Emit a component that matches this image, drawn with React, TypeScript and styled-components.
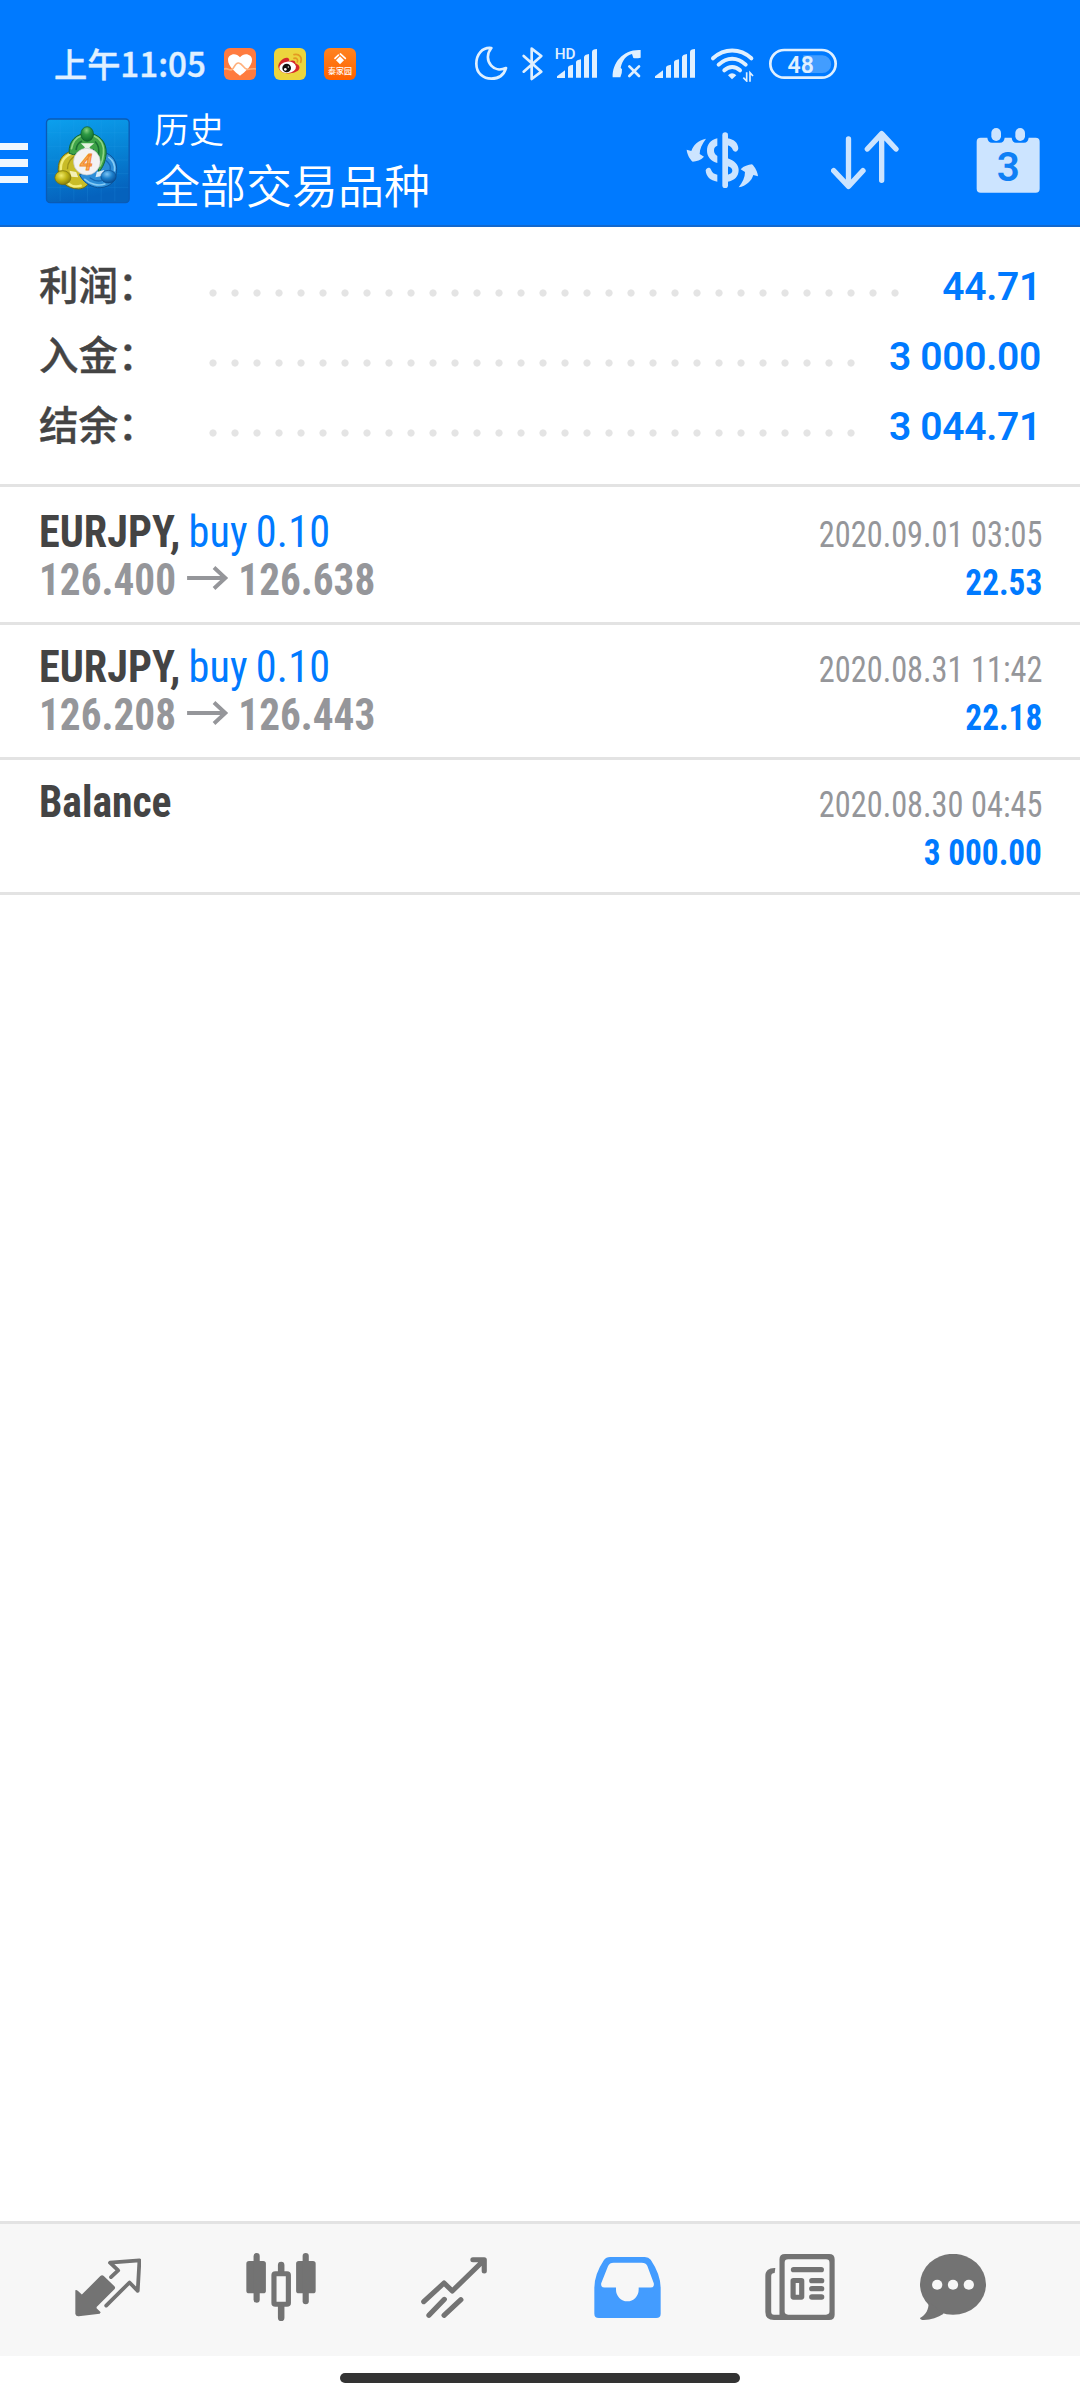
import React from "react";
import styled, { createGlobalStyle } from "styled-components";

const cjk = `"Noto Sans CJK SC", "Noto Sans", sans-serif`;
const latin = `Roboto, "Noto Sans CJK SC", sans-serif`;
const pale = "#cce4ff";
const status = "#e0f0ff";
const blue = "#007aff";

const GlobalStyle = createGlobalStyle`
  *, *::before, *::after { box-sizing: border-box; }
  body { margin: 0; background: #fff; }
`;

const Screen = styled.div`
  width: 1080px;
  height: 2400px;
  display: flex;
  flex-direction: column;
  background: #fff;
  font-family: ${latin};
  overflow: hidden;
`;

const Header = styled.header`
  height: 227px;
  background: ${blue};
  border-bottom: 2px solid #1268cd;
  display: flex;
  flex-direction: column;
`;

const StatusBar = styled.div`
  height: 100px;
  padding: 28px 0 0 54px;
  display: flex;
  align-items: center;
`;

const Clock = styled.div`
  width: 170px;
  margin-top: -3px;
  font: 500 33.2px/36px ${cjk};
  color: ${status};
  -webkit-text-stroke: 0.4px ${status};
  white-space: nowrap;
`;

const Notifications = styled.div`
  display: flex;
  gap: 18px;
  width: 249px;
`;

const StatusIcons = styled.div`
  display: flex;
  svg { display: block; }
`;

const Toolbar = styled.div`
  flex: 1;
  display: flex;
  align-items: flex-start;
`;

const MenuButton = styled.div`
  width: 28px;
  margin-top: 42.500px;
  display: flex;
  flex-direction: column;
  gap: 9px;
`;

const MenuLine = styled.i`
  height: 7.5px;
  background: #eef7ff;
`;

const LogoBox = styled.div`
  margin: 18px 0 0 17px;
  width: 86px;
  height: 86px;
  svg { display: block; }
`;

const Titles = styled.div`
  margin: 6px 0 0 23px;
  flex: 1;
  color: #fff;
  font-family: ${cjk};
  font-weight: 350;
  white-space: nowrap;
`;

const Title = styled.div`
  font-size: 35px;
  line-height: 44px;
`;

const Subtitle = styled.div`
  font-size: 46px;
  line-height: 66px;
`;

const Actions = styled.div`
  display: flex;
  align-items: center;
  height: 120px;
  padding-right: 39px;
  svg { display: block; }
`;

const Action = styled.div<{ $gap: number }>`
  margin-left: ${(p) => p.$gap}px;
`;

const Summary = styled.section`
  height: 260px;
  padding: 25px 39px 0 39px;
  border-bottom: 3px solid #e3e3e3;
`;

const SummaryRow = styled.div`
  height: 70px;
  display: flex;
  align-items: flex-start;
`;

const SummaryLabel = styled.div`
  width: 163px;
  font: 500 39.5px/61px ${cjk};
  color: #444;
  -webkit-text-stroke: 0.35px #444;
  white-space: nowrap;
`;

const Leader = styled.div`
  flex: 1;
  height: 8px;
  margin: 37px 31px 0 0;
  background: radial-gradient(circle at 11px 4px, #e4e4e4 3.2px, transparent 4px) 0 0 / 22px 8px repeat-x;
`;

const SummaryValue = styled.div`
  font: 650 39px/70px ${latin};
  letter-spacing: -0.3px;
  color: ${blue};
  white-space: nowrap;
`;

const List = styled.section`
  flex: 1;
  padding-top: 3px;
`;

const Deal = styled.div`
  height: 135px;
  padding: 20px 38px 0 39px;
  border-bottom: 3px solid #e3e3e3;
  display: flex;
  justify-content: space-between;
`;

const Column = styled.div<{ $end?: boolean }>`
  display: flex;
  flex-direction: column;
  align-items: ${(p) => (p.$end ? "flex-end" : "flex-start")};
  --origin: ${(p) => (p.$end ? "right" : "left")};
`;

const Line = styled.div<{ $squeeze: number }>`
  height: 48px;
  font-stretch: 75%;
  white-space: pre;
  transform: scaleX(${(p) => p.$squeeze});
  transform-origin: var(--origin) center;
`;

const Name = styled(Line)`
  font-size: 44px;
  font-weight: 700;
  line-height: 45px;
  color: #444;
`;

const Prices = styled(Name)`
  color: #95969a;
`;

const Time = styled(Line)`
  font-size: 36.5px;
  font-weight: 430;
  line-height: 50px;
  color: #95969a;
`;

const Profit = styled(Line)`
  font-size: 36px;
  font-weight: 700;
  line-height: 50px;
  color: ${blue};
`;

const Side = styled.span`
  font-weight: 400;
  color: ${blue};
  word-spacing: -2px;
  letter-spacing: 0.2px;
`;

const ArrowIcon = styled.svg`
  width: 45px;
  height: 24px;
  margin: 0 9.5px 0 12px;
  vertical-align: 5px;
`;

const TabBar = styled.nav`
  height: 135px;
  border-top: 3px solid #e3e3e3;
  background: #f7f7f7;
  display: flex;
  padding: 0 41px 0 21.5px;
`;

const Tab = styled.div<{ $width: number }>`
  width: ${(p) => p.$width}px;
  height: 126px;
  display: flex;
  align-items: center;
  justify-content: center;
`;

const GestureArea = styled.footer`
  height: 44px;
  padding-top: 17px;
  display: flex;
  justify-content: center;
`;

const GestureBar = styled.div`
  width: 400px;
  height: 10px;
  border-radius: 5px;
  background: #333;
`;

const HealthIcon = () => (
  <svg width="32" height="32" viewBox="0 0 96 96">
    <rect width="96" height="96" rx="18" fill="#ff7b3f" />
    <path d="M48 83C34 72 12 55 12 35C12 19 35 11 48 28C61 11 84 19 84 35C84 55 62 72 48 83Z" fill="#fff" />
    <path d="M0 64C8 57 15 68 23 65C32 61 32 43 44 45C57 47 58 63 70 64C78 65 87 60 96 63" fill="none" stroke="#ffb07c" strokeWidth="5" />
  </svg>
);

const WeiboIcon = () => (
  <svg width="32" height="32" viewBox="0 0 96 96">
    <rect width="96" height="96" rx="18" fill="#ecd53d" />
    <path d="M13 57C11 42 32 25 42 30C47 32 46 37 45 40C55 36 66 37 64 46C75 50 79 57 75 64C67 79 18 84 13 57Z" fill="#d5292b" />
    <ellipse cx="41" cy="58" rx="25" ry="17" fill="#fff" transform="rotate(-6 41 58)" />
    <circle cx="38" cy="60" r="13" fill="#111" />
    <circle cx="34" cy="64" r="4" fill="#fff" />
    <circle cx="43" cy="57" r="2" fill="#fff" />
    <path d="M60 20C76 16 86 29 80 43M60 31C68 29 73 35 70 42" fill="none" stroke="#e39a22" strokeWidth="5" strokeLinecap="round" />
  </svg>
);

const HomeIcon = () => (
  <svg width="32" height="32" viewBox="0 0 96 96">
    <defs>
      <linearGradient id="home" x1="0" y1="0" x2="0" y2="1">
        <stop offset="0" stopColor="#ff8420" /><stop offset="1" stopColor="#ff6200" />
      </linearGradient>
    </defs>
    <rect width="96" height="96" rx="18" fill="url(#home)" />
    <path d="M33 31L48 17L64 31" fill="none" stroke="#fff" strokeWidth="5" strokeLinecap="round" strokeDasharray="14 8 30" />
    <path d="M48 25L60 37L48 49L36 37Z" fill="#fff" />
    <text x="48" y="77" textAnchor="middle" fontFamily="Noto Sans CJK SC, sans-serif" fontSize="24" fontWeight="500" fill="#fff">泰家园</text>
  </svg>
);

const signalBars = (x: number) => (
  <g fill={status}>
    <path d={`M${x} 144V139L${x + 24} 121V144Z`} />
    <path d={`M${x + 33} 143V112Q${x + 34} 106 ${x + 48} 104V143Z`} />
    <path d={`M${x + 57} 143V96Q${x + 58} 90 ${x + 72} 88V143Z`} />
    <path d={`M${x + 81} 143V81Q${x + 82} 74 ${x + 96} 72V143Z`} />
    <path d={`M${x + 105} 143V65Q${x + 106} 58 ${x + 120} 57V143Z`} />
  </g>
);

const cell = (from: number, to: number) => ({
  width: (to - from) / 3,
  height: 36,
  viewBox: `${from} 48 ${to - from} 108`,
});

const SystemIcons = () => (
  <StatusIcons>
    <svg {...cell(99, 228)}>
      <path d="M154 54C126 51 109 74 109 101C109 130 130 146 154 146C176 146 192 134 198 114C182 121 164 119 153 106C140 91 141 70 154 54Z" fill="none" stroke={status} strokeWidth="8" strokeLinejoin="round" />
    </svg>
    <svg {...cell(228, 330)}>
      <path d="M251 78L304 125L275 147V56L304 78L251 125" fill="none" stroke={status} strokeWidth="8" strokeLinecap="round" strokeLinejoin="round" />
    </svg>
    <svg {...cell(330, 495)}>
      <text x="344" y="87" fontFamily="Roboto, sans-serif" fontWeight="500" fontSize="46" fill={status}>HD</text>
      {signalBars(351)}
    </svg>
    <svg {...cell(495, 624)}>
      <path d="M518 142C516 98 550 57 602 60V83Q588 86 580 84L576 72C558 76 548 91 542 113L546 118Q547 130 541 142Z" fill={status} />
      <path d="M568 109L597 138M597 109L568 138" stroke={status} strokeWidth="8" strokeLinecap="round" />
    </svg>
    <svg {...cell(624, 789)}>{signalBars(645)}</svg>
    <svg {...cell(789, 963)}>
      <g fill="none" stroke={status} strokeWidth="12" strokeLinecap="round">
        <path d="M819 85C853 54 900 54 934 85" />
        <path d="M836 104C861 80 892 80 917 104" />
        <path d="M853 121C867 108 886 108 900 121" />
      </g>
      <path d="M864 136Q876 124 889 136L876 148Z" fill={status} />
      <path d="M920 127V153L910 143M930 155V128L939 138" fill="none" stroke={status} strokeWidth="5" />
    </svg>
    <svg {...cell(963, 1200)}>
      <path d="M1090 76H1147A26 26 0 0 1 1147 129H1090Z" fill="#429dff" />
      <rect x="991" y="60" width="196" height="83" rx="41.5" fill="none" stroke={status} strokeWidth="8" />
      <text x="1082" y="128" textAnchor="middle" fontFamily="Roboto, sans-serif" fontWeight="600" fontSize="69" fill={status}>48</text>
    </svg>
  </StatusIcons>
);

const Logo = () => (
  <svg width="86" height="86" viewBox="5 6 257 258">
    <defs>
      <linearGradient id="sky" x1="0" y1="0" x2="0.2" y2="1">
        <stop offset="0" stopColor="#0ca0ee" />
        <stop offset="0.5" stopColor="#0784d6" />
        <stop offset="1" stopColor="#0562bd" />
      </linearGradient>
      <radialGradient id="green" cx="0.45" cy="0.25" r="0.75">
        <stop offset="0" stopColor="#86d383" /><stop offset="0.4" stopColor="#2e9a45" /><stop offset="1" stopColor="#0d6a2b" />
      </radialGradient>
      <radialGradient id="yellow" cx="0.4" cy="0.35" r="0.7">
        <stop offset="0" stopColor="#f0ea6a" /><stop offset="0.5" stopColor="#c0b416" /><stop offset="1" stopColor="#7f7708" />
      </radialGradient>
      <radialGradient id="azure" cx="0.4" cy="0.3" r="0.7">
        <stop offset="0" stopColor="#7cc4f5" /><stop offset="0.5" stopColor="#1c7fcb" /><stop offset="1" stopColor="#0a4f96" />
      </radialGradient>
    </defs>
    <rect x="9" y="9" width="248" height="251" rx="11" fill="url(#sky)" stroke="#0a5bb5" strokeWidth="4" />
    <path d="M50 12V256M91 12V256M132 12V256M173 12V256M214 12V256M12 50H254M12 91H254M12 132H254M12 173H254M12 214H254" stroke="#38aef0" strokeOpacity="0.22" strokeWidth="2" />
    <path d="M100 102C62 106 44 128 44 160C44 196 70 219 106 219C120 218 132 210 137 198L110 140Z" fill="#c9bc28" stroke="#6d6b12" strokeWidth="3" />
    <path d="M95 110C66 116 52 134 52 160M74 202C84 211 98 213 112 209" fill="none" stroke="#f3ec7c" strokeWidth="7" strokeLinecap="round" />
    <path d="M98 118C82 126 72 140 72 158" fill="none" stroke="#9c9218" strokeWidth="4" strokeLinecap="round" />
    <path d="M190 112C216 124 224 148 217 178C214 202 190 217 162 215C136 211 118 196 108 176L150 160Z" fill="#2d8ed8" stroke="#0b5298" strokeWidth="3" />
    <path d="M196 124C210 134 215 148 213 164M124 190C140 205 164 211 184 204" fill="none" stroke="#86cbf5" strokeWidth="5" strokeLinecap="round" />
    <path d="M188 134C198 142 202 152 200 160M140 186C152 195 164 196 174 194" fill="none" stroke="#1668b4" strokeWidth="4" strokeLinecap="round" />
    <path d="M77 112C74 74 100 52 132 52C166 52 190 78 188 112C186 138 178 154 166 168L150 100L90 116Z" fill="#3ea348" stroke="#0f6638" strokeWidth="3" />
    <path d="M84 98C88 76 100 64 112 60M152 60C172 68 182 88 180 112C179 128 175 140 170 150" fill="none" stroke="#8ed585" strokeWidth="5" strokeLinecap="round" />
    <path d="M98 100C100 86 106 80 114 76M156 78C166 88 168 100 165 118" fill="none" stroke="#1a7034" strokeWidth="5" strokeLinecap="round" />
    <path d="M112 82H152L138 94L142 102H120L124 94Z" fill="#e4f3e0" />
    <path d="M78 164L98 168L104 184L84 182Z" fill="#f3f0b8" />
    <path d="M182 162L160 168L156 184L176 180Z" fill="#d3e9f8" />
    <ellipse cx="131" cy="54" rx="19" ry="22" fill="url(#green)" stroke="#0d5c2b" strokeWidth="2" />
    <ellipse cx="58" cy="185" rx="24" ry="21" fill="url(#yellow)" stroke="#736c0c" strokeWidth="2" />
    <ellipse cx="195" cy="182" rx="23" ry="19" fill="url(#azure)" stroke="#0b4c8e" strokeWidth="2" />
    <circle cx="130" cy="137" r="40" fill="#f3f2f3" stroke="#c3c5c8" strokeWidth="2" />
    <text x="128" y="161" textAnchor="middle" fontFamily="Roboto, sans-serif" fontSize="68" fontWeight="500" fontStyle="italic" fill="#ffb45e" stroke="#f0882a" strokeWidth="3">4</text>
  </svg>
);

const swapArrow = "M137 114C114 118 98 134 93 151L79 147C80 160 88 175 97 183C108 182 122 178 131 168L118 160C118 144 125 130 137 114Z";

const CurrencyIcon = () => (
  <svg width="73" height="56" viewBox="77 94 219 168" fill={pale}>
    <path d={swapArrow} />
    <path d={swapArrow} transform="rotate(180 186 187)" />
    <path d="M171 113C150 118 140 132 140 150C140 168 152 182 171 187V166C163 161 161 156 161 149C161 142 164 138 171 135Z" />
    <path d="M136 209C139 200 149 199 152 207C156 216 161 220 171 222V243C150 240 137 228 136 209Z" />
    <rect x="186" y="95" width="17" height="167" rx="8.5" />
    <path d="M202 113C220 116 233 126 234 143C233 154 223 156 218 149C214 140 211 136 202 134Z" />
    <path fillRule="evenodd" d="M202 173C222 180 235 192 235 208C235 228 222 240 202 243ZM202 197V222C211 220 216 215 216 210C216 204 212 200 202 197Z" />
  </svg>
);

const SortIcon = () => (
  <svg width="68" height="60" viewBox="513 92 204 180" fill="none" stroke={pale} strokeWidth="16" strokeLinecap="round" strokeLinejoin="round">
    <path d="M565.5 119V258M521 214L565.5 261L609 214M665 243V104M622 149L665 103L708 149" />
  </svg>
);

const CalendarIcon = () => (
  <svg width="65" height="65" viewBox="948 83 195 195">
    <path d="M962 112H982Q984 127 996 127H1020Q1032 127 1034 112H1055Q1057 127 1068 127H1092Q1104 127 1106 112H1127Q1139 112 1139 124V265Q1139 277 1127 277H962Q950 277 950 265V124Q950 112 962 112Z" fill={pale} />
    <rect x="994" y="83" width="29" height="39" rx="14.5" fill={pale} />
    <rect x="1066" y="83" width="29" height="39" rx="14.5" fill={pale} />
    <text x="1045" y="242" textAnchor="middle" fontFamily="Roboto, sans-serif" fontSize="121" fontWeight="600" fill="#0f80f5">3</text>
  </svg>
);

const grey = "#737373";

const QuotesIcon = () => (
  <svg width="66.5" height="59" viewBox="218 177 194 176" preserveAspectRatio="none">
    <path d="M219 273Q222 271 226 275L238 286L292 231Q297 226 302 231L333 261Q337 266 333 270L281 323V327L293 339L290 343L229 351Q221 352 219 344Z" fill={grey} />
    <path d="M323 234L344 214L320 191L406 184L401 275L377 250L309 319" fill="none" stroke={grey} strokeWidth="11" strokeLinecap="round" strokeLinejoin="round" />
  </svg>
);

const ChartIcon = () => (
  <svg width="70" height="68" viewBox="714 162 204 204" preserveAspectRatio="none" fill={grey}>
    <rect x="715" y="186" width="57" height="97" rx="8" />
    <rect x="736" y="162" width="18" height="149" rx="9" />
    <rect x="860" y="186" width="57" height="97" rx="8" />
    <rect x="879" y="162" width="18" height="154" rx="9" />
    <path d="M807 225V198Q807 188 816.500 188Q826 188 826 198V225ZM807 316V356Q807 366 816.500 366Q826 366 826 356V316Z" />
    <rect x="795.500" y="224" width="42" height="92" rx="4" fill="#f7f7f7" stroke={grey} strokeWidth="15" />
  </svg>
);

const TradeIcon = () => (
  <svg width="66" height="61" viewBox="1222 170 192 183" preserveAspectRatio="none" fill="none" stroke={grey} strokeWidth="15" strokeLinecap="round" strokeLinejoin="round">
    <path d="M1230 304L1289 248L1313 272L1405 180M1373 178H1406V212" />
    <path d="M1290 297L1245 345M1338 298L1289 345" />
  </svg>
);

const HistoryIcon = () => (
  <svg width="67" height="61" viewBox="157 170 195 182" preserveAspectRatio="none">
    <path fill="#439cff" fillRule="evenodd" d="M204 170H305Q316 170 322 178Q351 222 351 262V339Q351 352 338 352H171Q158 352 158 339V262Q158 222 186 179Q192 170 204 170ZM214 187H296Q308 187 312 196L331 248Q333 261 322 261H287V268A33 34 0 0 1 221 268V261H188Q176 261 178 248L198 197Q202 187 214 187Z" />
  </svg>
);

const NewsIcon = () => (
  <svg width="70" height="66" viewBox="656 162 203 198" preserveAspectRatio="none">
    <g fill={grey}>
      <path fillRule="evenodd" d="M714 162H842Q858 162 858 178V344Q858 360 842 360H698V178Q698 162 714 162ZM723 178Q713 178 713 188V334Q713 344 723 344H833Q843 344 843 334V188Q843 178 833 178Z" />
      <path d="M686 204C668 203 657 212 657 227V336Q657 360 682 360H700V344H682Q674 344 674 335V228Q674 219 684 219Z" />
      <rect x="731" y="201" width="96" height="16" rx="8" />
      <rect x="784" y="234" width="44" height="16" rx="8" />
      <rect x="784" y="258" width="44" height="16" rx="8" />
      <rect x="784" y="283" width="44" height="16" rx="8" />
    </g>
    <rect x="737.500" y="241.500" width="25" height="50" rx="1" fill="none" stroke={grey} strokeWidth="15" />
  </svg>
);

const MessagesIcon = () => (
  <svg width="66" height="66" viewBox="1103 162 192 198" preserveAspectRatio="none">
    <ellipse cx="1199" cy="253" rx="96" ry="91.500" fill={grey} />
    <path d="M1128 305C1129 330 1120 343 1103 354Q1104 360 1114 360C1135 359 1155 352 1172 341Z" fill={grey} />
    <circle cx="1153" cy="254" r="15" fill="#f7f7f7" />
    <circle cx="1199" cy="254" r="15" fill="#f7f7f7" />
    <circle cx="1245" cy="254" r="15" fill="#f7f7f7" />
  </svg>
);

const summary = [
  { label: "利润：", value: "44.71" },
  { label: "入金：", value: "3 000.00" },
  { label: "结余：", value: "3 044.71" },
];

const deals = [
  { name: "EURJPY,", side: "buy 0.10", open: "126.400", close: "126.638", time: "2020.09.01 03:05", profit: "22.53" },
  { name: "EURJPY,", side: "buy 0.10", open: "126.208", close: "126.443", time: "2020.08.31 11:42", profit: "22.18" },
  { name: "Balance", time: "2020.08.30 04:45", profit: "3 000.00" },
];

export default function App() {
  return (
    <>
      <GlobalStyle />
      <Screen>
        <Header>
          <StatusBar>
            <Clock>上午11:05</Clock>
            <Notifications>
              <HealthIcon />
              <WeiboIcon />
              <HomeIcon />
            </Notifications>
            <SystemIcons />
          </StatusBar>
          <Toolbar>
            <MenuButton>
              <MenuLine />
              <MenuLine />
              <MenuLine />
            </MenuButton>
            <LogoBox>
              <Logo />
            </LogoBox>
            <Titles>
              <Title>历史</Title>
              <Subtitle>全部交易品种</Subtitle>
            </Titles>
            <Actions>
              <Action $gap={0}><CurrencyIcon /></Action>
              <Action $gap={72}><SortIcon /></Action>
              <Action $gap={77}><CalendarIcon /></Action>
            </Actions>
          </Toolbar>
        </Header>
        <Summary>
          {summary.map((s) => (
            <SummaryRow key={s.label}>
              <SummaryLabel>{s.label}</SummaryLabel>
              <Leader />
              <SummaryValue>{s.value}</SummaryValue>
            </SummaryRow>
          ))}
        </Summary>
        <List>
          {deals.map((d) => (
            <Deal key={d.time}>
              <Column>
                <Name $squeeze={d.side ? 0.96 : 0.945}>
                  {d.name}
                  {d.side && <Side> {d.side}</Side>}
                </Name>
                {d.open && (
                  <Prices $squeeze={0.937}>
                    {d.open}
                    <ArrowIcon viewBox="0 0 43 24" preserveAspectRatio="none">
                      <path d="M0 12H40M27.500 1.500L39 12L27.500 22.500" fill="none" stroke="#95969a" strokeWidth="4" />
                    </ArrowIcon>
                    {d.close}
                  </Prices>
                )}
              </Column>
              <Column $end>
                <Time $squeeze={0.886}>{d.time}</Time>
                <Profit $squeeze={0.924}>{d.profit}</Profit>
              </Column>
            </Deal>
          ))}
        </List>
        <TabBar>
          <Tab $width={173}><QuotesIcon /></Tab>
          <Tab $width={173}><ChartIcon /></Tab>
          <Tab $width={173}><TradeIcon /></Tab>
          <Tab $width={173}><HistoryIcon /></Tab>
          <Tab $width={173}><NewsIcon /></Tab>
          <Tab $width={132}><MessagesIcon /></Tab>
        </TabBar>
        <GestureArea>
          <GestureBar />
        </GestureArea>
      </Screen>
    </>
  );
}
